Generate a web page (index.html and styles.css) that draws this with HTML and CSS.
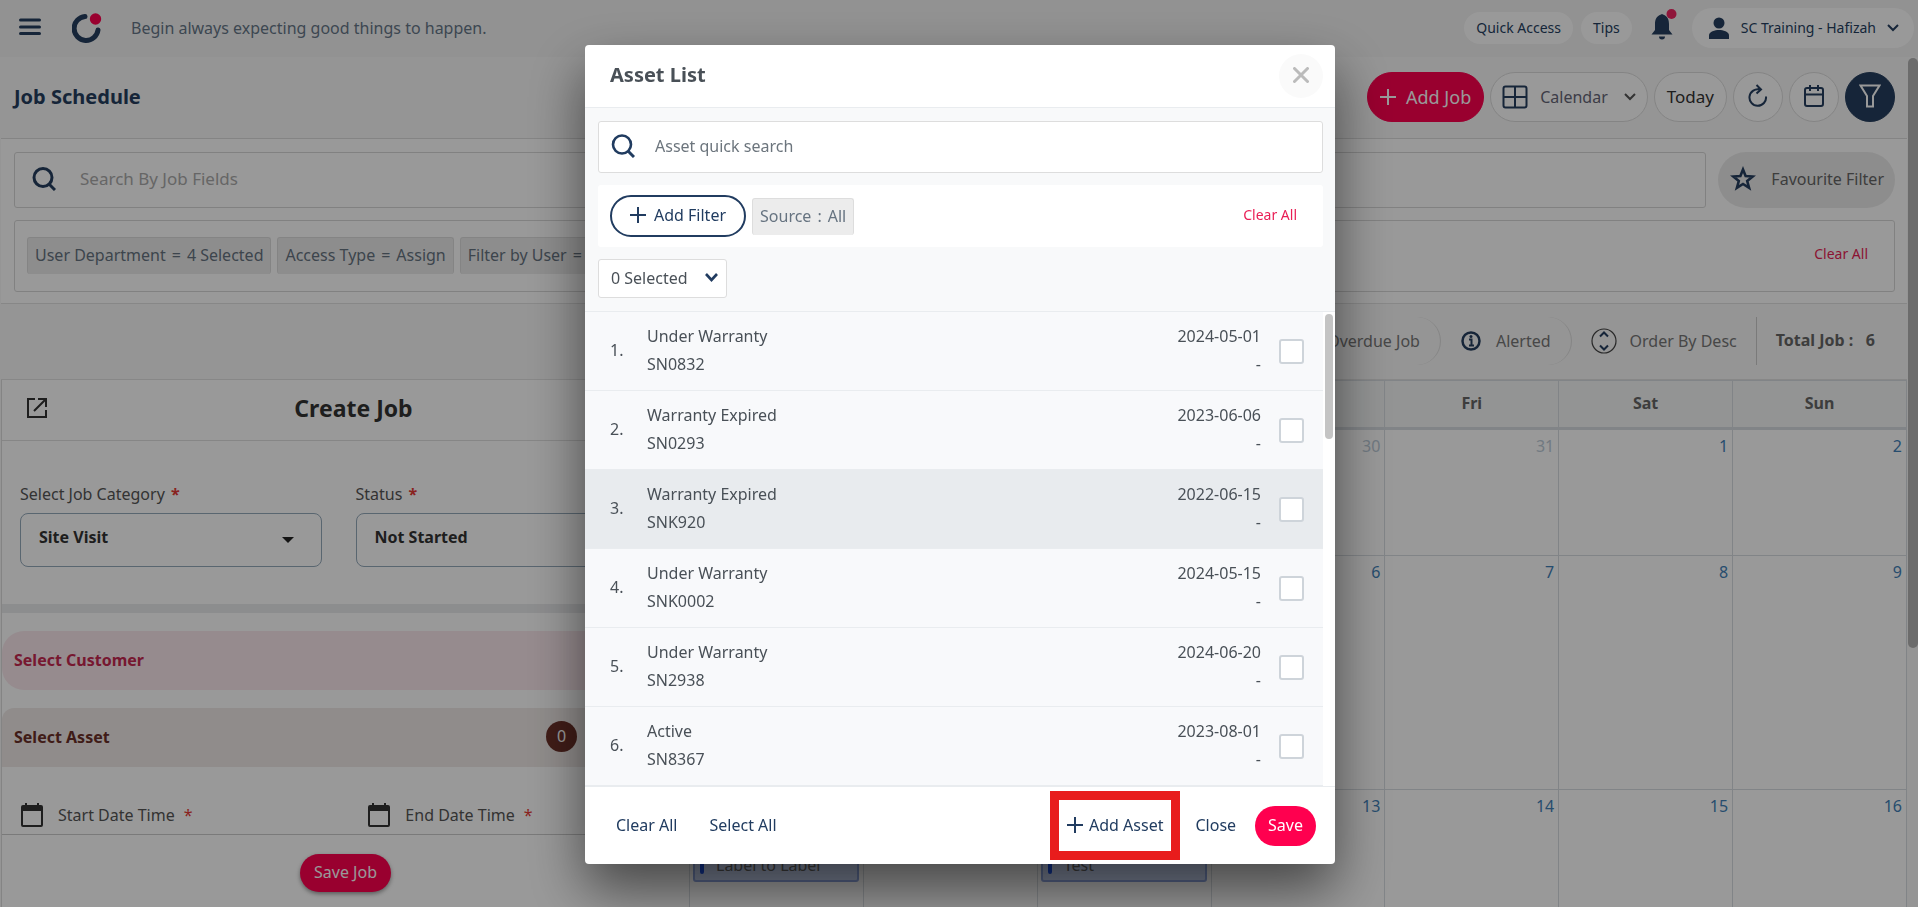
FILE: index.html
```html
<!DOCTYPE html>
<html lang="en">
<head>
<meta charset="utf-8">
<meta name="viewport" content="width=device-width, initial-scale=1">
<title>Job Schedule</title>
<link rel="stylesheet" href="styles.css">
</head>
<body>
<div class="app">
  <header class="topbar">
    <button class="plain" aria-label="Menu"><svg width="24" height="20" viewBox="0 0 24 20"><path d="M2.500 3h19M2.500 10h19M2.500 16.500h19" stroke="#263f5f" stroke-width="3" stroke-linecap="round"/></svg></button>
    <svg class="logo" width="30" height="32" viewBox="0 0 30 32"><path d="M13 4.500A12 12 0 1 0 26 18" fill="none" stroke="#263f5f" stroke-width="5" stroke-linecap="round"/><circle cx="23.500" cy="7" r="5.700" fill="#ff004f"/></svg>
    <p class="motto">Begin always expecting good things to happen.</p>
    <nav class="topnav">
      <button class="chip-btn">Quick Access</button>
      <button class="chip-btn">Tips</button>
      <button class="plain bell" aria-label="Notifications"><svg width="28" height="34" viewBox="0 0 28 34"><path d="M11 6.500c-5 1.500-6 6-6 9.500v6l-3.500 4.500h21L19 22v-6c0-3.500-1-8-6-9.500a1.300 1.300 0 0 0-2 0zM9 28.500h6a3 3 0 0 1-6 0z" fill="#263f5f"/><circle cx="21.500" cy="6" r="5" fill="#ef2361"/></svg></button>
      <button class="chip-btn user"><svg width="22" height="22" viewBox="0 0 22 22"><circle cx="11" cy="6" r="5.500" fill="#263f5f"/><path d="M1 22v-3.500C1 14.500 7 13 11 13s10 1.500 10 5.500V22z" fill="#263f5f"/></svg><span>SC Training - Hafizah</span><svg width="12" height="8" viewBox="0 0 12 8"><path d="M1 1l5 5 5-5" fill="none" stroke="#263f5f" stroke-width="2"/></svg></button>
    </nav>
  </header>

  <main class="page">
    <section class="titlebar">
      <h1>Job Schedule</h1>
      <div class="actions">
        <button class="pill add-job"><svg width="16" height="16" viewBox="0 0 16 16"><path d="M8 0v16M0 8h16" stroke="#fff" stroke-width="2"/></svg>Add Job</button>
        <button class="pill view"><svg width="26" height="24" viewBox="0 0 26 24"><rect x="1.500" y="1.500" width="23" height="21" rx="2" fill="none" stroke="#263f5f" stroke-width="2"/><path d="M13 1v22M1 12h24" stroke="#263f5f" stroke-width="2"/></svg><span>Calendar</span><svg width="12" height="8" viewBox="0 0 12 8"><path d="M1 1l5 5 5-5" fill="none" stroke="#555" stroke-width="2"/></svg></button>
        <button class="pill today">Today</button>
        <button class="pill round" aria-label="Refresh"><svg width="20" height="24" viewBox="0 0 20 24"><path d="M18 12.500A8.300 8.300 0 1 1 12 5.500M8.500 1l4.500 4.500-4.500 4" fill="none" stroke="#263f5f" stroke-width="2"/></svg></button>
        <button class="pill round" aria-label="Pick date"><svg width="20" height="24" viewBox="0 0 20 24"><rect x="1" y="4" width="18" height="18" rx="2" fill="none" stroke="#263f5f" stroke-width="2"/><path d="M6 1v6M14 1v6M1 10.500h18" stroke="#263f5f" stroke-width="2"/></svg></button>
        <button class="pill round dark" aria-label="Filter"><svg width="22" height="24" viewBox="0 0 22 24"><path d="M1.500 1.500h19L14 12v10.500H8V12z" fill="none" stroke="#fff" stroke-width="2"/></svg></button>
      </div>
    </section>

    <section class="filters">
      <div class="search-row">
        <label class="search"><svg width="24" height="24" viewBox="0 0 24 24"><circle cx="11" cy="10.500" r="9" fill="none" stroke="#263f5f" stroke-width="3"/><path d="M17 17l6 6" stroke="#263f5f" stroke-width="3"/></svg><input type="text" placeholder="Search By Job Fields" aria-label="Search By Job Fields"></label>
        <button class="favourite"><svg width="26" height="26" viewBox="0 0 26 26"><path d="M13 3.500l2.600 6.600 7.100.4-5.500 4.500 1.900 6.900-6.100-3.900-6.100 3.900 1.900-6.900-5.500-4.500 7.100-.4z" fill="none" stroke="#263f5f" stroke-width="2.600"/></svg>Favourite Filter</button>
      </div>
      <div class="chips">
        <span class="tag">User Department<span class="op">=</span>4 Selected</span>
        <span class="tag">Access Type<span class="op">=</span>Assign</span>
        <span class="tag">Filter by User<span class="op">=</span>All</span>
        <button class="plain clear">Clear All</button>
      </div>
    </section>

    <section class="statusbar">
      <span class="status">Overdue Job</span>
      <span class="status"><svg width="20" height="20" viewBox="0 0 20 20"><circle cx="10" cy="10" r="8.500" fill="none" stroke="#263f5f" stroke-width="2.500"/><path d="M8 8.500h2.500V14M8 14.500h5" fill="none" stroke="#263f5f" stroke-width="2"/><circle cx="10" cy="5.500" r="1.500" fill="#263f5f"/></svg>Alerted</span>
      <button class="plain order"><svg width="26" height="26" viewBox="0 0 26 26"><circle cx="13" cy="13" r="12" fill="none" stroke="#444" stroke-width="1.200"/><path d="M9 8.500l4-4 4 4M9 17.500l4 4 4-4" fill="none" stroke="#263f5f" stroke-width="2"/></svg>Order By Desc</button>
      <span class="total">Total Job :&nbsp;&nbsp; 6</span>
    </section>

    <div class="workspace">
      <form class="job" onsubmit="return false">
        <div class="job-head">
          <button type="button" class="plain" aria-label="Open in new window"><svg width="22" height="22" viewBox="0 0 22 22"><path d="M9 2H2v18h18v-7M12 2h8v8M20 2L8 14" fill="none" stroke="#333" stroke-width="2"/></svg></button>
          <h2>Create Job</h2>
        </div>
        <div class="job-fields">
          <div class="field">
            <label for="category">Select Job Category <b class="req">*</b></label>
            <div class="select"><select id="category"><option>Site Visit</option></select><svg width="12" height="6" viewBox="0 0 12 6"><path d="M0 0h12L6 6z" fill="#222"/></svg></div>
          </div>
          <div class="field">
            <label for="status">Status <b class="req">*</b></label>
            <div class="select"><select id="status"><option>Not Started</option></select><svg width="12" height="6" viewBox="0 0 12 6"><path d="M0 0h12L6 6z" fill="#222"/></svg></div>
          </div>
        </div>
        <button type="button" class="band customer">Select Customer</button>
        <button type="button" class="band asset">Select Asset<span class="count">0</span></button>
        <div class="dates">
          <button type="button" class="plain"><svg width="22" height="24" viewBox="0 0 22 24"><path d="M5 0v4M17 0v4" stroke="#333" stroke-width="2"/><rect x="1" y="3" width="20" height="20" rx="1" fill="none" stroke="#333" stroke-width="2"/><path d="M1 3h20v5H1z" fill="#333"/></svg>Start Date Time <b class="req">*</b></button>
          <button type="button" class="plain"><svg width="22" height="24" viewBox="0 0 22 24"><path d="M5 0v4M17 0v4" stroke="#333" stroke-width="2"/><rect x="1" y="3" width="20" height="20" rx="1" fill="none" stroke="#333" stroke-width="2"/><path d="M1 3h20v5H1z" fill="#333"/></svg>End Date Time <b class="req">*</b></button>
        </div>
        <div class="job-foot"><button type="submit" class="save-job">Save Job</button></div>
      </form>

      <div class="calendar-pane">
      <table class="calendar">
        <thead><tr><th>Mon</th><th>Tue</th><th>Wed</th><th>Thu</th><th>Fri</th><th>Sat</th><th>Sun</th></tr></thead>
        <tbody>
          <tr class="short"><td class="out">27</td><td class="out">28</td><td class="out">29</td><td class="out">30</td><td class="out">31</td><td>1</td><td>2</td></tr>
          <tr class="tall"><td>3</td><td>4</td><td>5</td><td>6</td><td>7</td><td>8</td><td>9</td></tr>
          <tr class="tall"><td>10<div class="event"><i></i>Label to Label</div></td><td>11</td><td>12<div class="event"><i></i>Test</div></td><td>13</td><td>14</td><td>15</td><td>16</td></tr>
        </tbody>
      </table>
      </div>
    </div>
    <div class="page-thumb"></div>
  </main>
</div>

<div class="overlay">
  <div class="modal" role="dialog" aria-labelledby="asset-title">
    <div class="modal-head">
      <h2 id="asset-title">Asset List</h2>
      <button class="close" aria-label="Close"><svg width="16" height="16" viewBox="0 0 16 16"><path d="M1.500 1.500l13 13M14.500 1.500l-13 13" stroke="#bbb" stroke-width="3" stroke-linecap="round"/></svg></button>
    </div>
    <div class="modal-tools">
      <label class="quick"><svg width="24" height="24" viewBox="0 0 24 24"><circle cx="11" cy="10.500" r="9" fill="none" stroke="#213c60" stroke-width="2.600"/><path d="M17 17l6 6" stroke="#213c60" stroke-width="3"/></svg><input type="text" placeholder="Asset quick search" aria-label="Asset quick search"></label>
      <div class="filter-row">
        <button class="add-filter"><svg width="16" height="16" viewBox="0 0 16 16"><path d="M8 0v16M0 8h16" stroke="#213c60" stroke-width="2"/></svg>Add Filter</button>
        <span class="tag">Source<span class="op">:</span>All</span>
        <button class="plain clear">Clear All</button>
      </div>
      <div class="picked"><select aria-label="Selection"><option>0 Selected</option></select><svg width="13" height="9" viewBox="0 0 13 9"><path d="M1 1l5.500 6L12 1" fill="none" stroke="#213c60" stroke-width="2.600"/></svg></div>
    </div>
    <div class="list">
      <ol class="assets">
        <li><span class="no">1.</span><label for="a1">Under Warranty<br>SN0832</label><span class="when">2024-05-01<br>-</span><input type="checkbox" id="a1"></li>
        <li><span class="no">2.</span><label for="a2">Warranty Expired<br>SN0293</label><span class="when">2023-06-06<br>-</span><input type="checkbox" id="a2"></li>
        <li class="hover"><span class="no">3.</span><label for="a3">Warranty Expired<br>SNK920</label><span class="when">2022-06-15<br>-</span><input type="checkbox" id="a3"></li>
        <li><span class="no">4.</span><label for="a4">Under Warranty<br>SNK0002</label><span class="when">2024-05-15<br>-</span><input type="checkbox" id="a4"></li>
        <li><span class="no">5.</span><label for="a5">Under Warranty<br>SN2938</label><span class="when">2024-06-20<br>-</span><input type="checkbox" id="a5"></li>
        <li><span class="no">6.</span><label for="a6">Active<br>SN8367</label><span class="when">2023-08-01<br>-</span><input type="checkbox" id="a6"></li>
      </ol>
      <div class="track"><div class="thumb"></div></div>
    </div>
    <div class="modal-foot">
      <button class="plain">Clear All</button>
      <button class="plain">Select All</button>
      <div class="foot-right">
        <button class="add-asset"><svg width="16" height="16" viewBox="0 0 16 16"><path d="M8 0v16M0 8h16" stroke="#213c60" stroke-width="2"/></svg>Add Asset</button>
        <button class="plain">Close</button>
        <button class="save">Save</button>
      </div>
    </div>
  </div>
</div>
</body>
</html>
```

FILE: styles.css
```css
* { box-sizing: border-box; }
body { margin: 0; font: 16px/28px "Noto Sans", "Open Sans", sans-serif; color: #555; background: #fff; }
h1, h2, p, ol { margin: 0; padding: 0; }
button, input, select { font: inherit; color: inherit; }
button { display: inline-flex; align-items: center; border: 0; padding: 0 0 2px; white-space: nowrap; cursor: pointer; }
svg { flex: none; display: block; }
.plain { background: none; }
.req { color: #e53935; margin-left: 2px; }

.app { height: 100vh; overflow: hidden; display: flex; flex-direction: column; }
.topbar { flex: none; height: 57px; background: #f4f4f4; display: flex; align-items: center; padding: 0 4px 2px 18px; }
.logo { margin: 0 29px 0 30px; }
.motto { color: #667788; flex: 1; }
.topnav { display: flex; align-items: center; gap: 8px; font-size: 14px; color: #263f5f; }
.chip-btn { background: #fff; border-radius: 20px; height: 32px; padding: 0 12px; }
.bell { margin: -4px 6px 0 10px; }
.user { height: 40px; padding: 0 15px 0 16px; gap: 11px; }

.page { position: relative; flex: 1; min-height: 0; padding: 0 11px 0 1px; display: flex; flex-direction: column; background: #f8f8f8; }
.page-thumb { position: absolute; right: 0; top: 1px; width: 10px; height: 590px; border-radius: 5px; background: #b4b4b4; }
.titlebar { flex: none; height: 82px; display: flex; align-items: center; justify-content: space-between; padding: 0 12px 2px 13px; border-bottom: 1px solid #ddd; }
h1 { font-size: 20px; color: #263f5f; }
.actions { display: flex; gap: 6px; }
.pill { height: 50px; border-radius: 25px; background: #fff; border: 1px solid #ddd; justify-content: center; }
.add-job { background: #ff004f; border-color: #ff004f; color: #fff; padding: 0 12px; gap: 10px; font-size: 18px; }
.view { padding: 0 11px; gap: 12px; color: #667; }
.view span { margin-right: 4px; }
.today { padding: 0 12px; color: #333; font-size: 17px; }
.round { width: 50px; }
.dark { background: #263f5f; border-color: #263f5f; }

.filters { flex: none; background: #fff; padding: 13px 12px 11px 13px; border-bottom: 1px solid #e2e2e2; }
.search-row { display: flex; gap: 12px; }
.search { flex: 1; height: 56px; border: 1px solid #d8d8d8; border-radius: 3px; display: flex; align-items: center; padding: 0 17px 2px; gap: 24px; font-size: 17px; }
input[type="text"] { flex: 1; border: 0; outline: 0; background: none; padding: 0; }
.search input::placeholder { color: #aaa; opacity: 1; }
.favourite { height: 56px; border-radius: 28px; background: #ececec; padding: 0 11px 2px 12px; gap: 15px; color: #666; }
.chips { margin-top: 12px; height: 72px; border: 1px solid #d8d8d8; border-radius: 3px; display: flex; align-items: center; gap: 6px; padding: 0 26px 2px 12px; }
.tag { height: 37px; line-height: 34px; padding: 0 7px; background: #ececec; border: 1px solid #ddd; border-bottom: 0; border-radius: 3px; color: #667380; white-space: nowrap; }
.op { margin: 0 6px; }
.clear { margin-left: auto; font-size: 14px; color: #e91e55; }

.statusbar { flex: none; height: 75px; display: flex; align-items: center; justify-content: flex-end; padding: 0 32px 2px 0; color: #777; }
.status { display: flex; align-items: center; gap: 15px; height: 48px; border-right: 1px solid #ddd; border-radius: 24px; padding: 0 20px; }
.order { gap: 13px; padding: 0 19px; }
.total { border-left: 1px solid #ccc; height: 48px; line-height: 46px; padding-left: 19px; font-weight: 700; color: #666; }

.workspace { flex: 1; min-height: 0; display: flex; background: #fff; border-top: 1px solid #e2e2e2; overflow: hidden; }
.job { width: 688px; flex: none; display: flex; flex-direction: column; border-left: 1px solid #ddd; }
.job-head { height: 61px; flex: none; display: flex; align-items: center; padding: 0 24px 2px; border-bottom: 1px solid #e0e0e0; }
.job-head h2 { flex: 1; text-align: center; padding: 0 6px 2px 0; font-size: 23px; color: #333; }
.job-fields { display: grid; grid-template-columns: 1fr 1fr; gap: 34px; padding: 39px 32px 37px 18px; border-bottom: 9px solid #eaebed; }
.field { display: flex; flex-direction: column; gap: 5px; }
.select { height: 54px; border: 1px solid #95aabb; border-radius: 8px; display: flex; align-items: center; padding-right: 27px; }
.select select { flex: 1; appearance: none; border: 0; background: none; padding: 0 18px 6px; font-weight: 700; color: #333; height: 50px; }
.band { flex: none; height: 59px; margin-top: 18px; padding: 0 112px 2px 12px; font-weight: 700; justify-content: space-between; }
.customer { background: #fae8ed; color: #c62851; border-radius: 22px; }
.asset { background: #f0eae8; color: #6b3028; border-radius: 12px 12px 0 0; }
.count { width: 31px; height: 31px; border-radius: 50%; background: #6b3028; color: #fff; font-weight: 400; line-height: 30px; }
.dates { height: 68px; flex: none; display: grid; grid-template-columns: 52% 48%; padding: 29px 0 0 19px; border-bottom: 1px solid #ccc; }
.dates button { gap: 15px; height: 40px; }
.dates .req { margin-left: -6px; font-weight: 400; }
.job-foot { display: flex; justify-content: center; padding-top: 19px; }
.save-job { height: 38px; border-radius: 19px; background: #ff004f; color: #fff; padding: 0 14px 2px; box-shadow: 0 2px 4px rgba(0,0,0,.4); }

.calendar-pane { flex: 1; }
.calendar { width: 100%; table-layout: fixed; border-collapse: collapse; }
.calendar th { height: 48px; padding: 0 0 2px; background: #f5f7f7; border: 1px solid #d8dde2; border-bottom: 3px solid #d8dde2; color: #666; }
.calendar td { border: 1px solid #d8dde2; vertical-align: top; text-align: right; padding: 2px 4px 0 3px; color: #4281b8; }
.calendar .out { color: #bccbd8; }
.short td { height: 127px; }
.tall td { height: 234px; }
.event { height: 52px; margin-top: 10px; background: #c9d6f5; border: 2px solid #8fa6e0; border-radius: 3px; display: flex; align-items: flex-end; gap: 12px; padding: 0 5px 1px; color: #666; }
.event i { width: 4px; height: 40px; margin-bottom: 5px; border-radius: 2px; background: #1a4fe0; }

.overlay { position: fixed; inset: 0; background: rgba(0,0,0,.4); display: flex; justify-content: center; align-items: flex-start; padding: 45px 0 42px 2px; }
.modal { width: 750px; max-width: 100%; display: flex; flex-direction: column; background: #fff; border-radius: 4px; overflow: hidden; box-shadow: 0 25px 55px rgba(0,0,0,.55); color: #495057; }
.modal-head { height: 63px; display: flex; align-items: center; justify-content: space-between; padding: 0 12px 0 25px; border-bottom: 1px solid #e9ecef; }
.modal-head h2 { font-size: 20px; padding-bottom: 2px; }
.close { width: 44px; height: 44px; border-radius: 50%; background: #fafafa; justify-content: center; }
.modal-tools { background: #f8f9fa; padding: 13px 12px 13px 13px; display: flex; flex-direction: column; align-items: stretch; gap: 12px; border-bottom: 1px solid #e9ecef; }
.quick { height: 52px; background: #fff; border: 1px solid #ddd; border-radius: 3px; display: flex; align-items: center; padding: 0 12px 2px; gap: 20px; }
.quick input::placeholder { color: #6c757d; opacity: 1; }
.filter-row { height: 62px; background: #fff; border-radius: 3px; display: flex; align-items: center; padding: 0 26px 0 12px; gap: 6px; }
.add-filter { height: 42px; border: 2px solid #213c60; border-radius: 21px; background: #fff; color: #213c60; padding: 0 18px 2px; gap: 8px; }
.picked { align-self: flex-start; height: 39px; background: #fff; border: 1px solid #ddd; border-radius: 3px; display: flex; align-items: center; padding: 0 8px 2px 12px; gap: 17px; }
.picked select { appearance: none; border: 0; background: none; padding: 0; }
.list { display: flex; border-bottom: 1px solid #e9ecef; }
.assets { flex: 1; list-style: none; background: #f8f9fb; }
.assets li { height: 79px; display: flex; align-items: center; padding: 0 19px 0 25px; border-bottom: 1px solid #e9ecef; }
.assets .hover { background: #e8ebee; }
.no { width: 37px; padding-bottom: 2px; }
.assets label { flex: 1; padding-bottom: 2px; }
.when { text-align: right; margin-right: 18px; padding-bottom: 2px; }
.assets input { appearance: none; margin: 0; width: 25px; height: 25px; border: 2px solid #ced4da; border-radius: 3px; background: #fff; }
.track { width: 12px; padding: 2px; }
.thumb { height: 125px; border-radius: 4px; background: #c4c4c4; }
.modal-foot { height: 77px; display: flex; align-items: center; padding: 0 19px 0 31px; gap: 32px; color: #213c60; }
.foot-right { margin-left: auto; display: flex; align-items: center; gap: 15px; }
.add-asset { height: 69px; border: 9px solid #e81c1c; background: #fff; padding: 0 8px 2px; gap: 6px; }
.save { height: 40px; border-radius: 20px; background: #ff004f; color: #fff; padding: 0 13px 2px; margin-left: 4px; }
```
